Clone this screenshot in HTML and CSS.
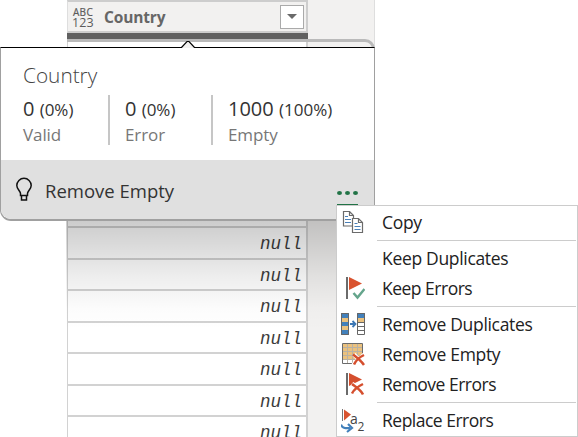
FILE: index.html
```html
<!DOCTYPE html>
<html lang="en">
<head>
<meta charset="utf-8">
<title>Country</title>
<link rel="stylesheet" href="styles.css">
</head>
<body>
<main class="workspace">
  <section class="column">
    <header class="column-header">
      <span class="type-icon"><span class="abc">ABC</span><span class="num">123</span></span>
      <span class="column-name">Country</span>
      <span class="filter"><svg width="10" height="5" viewBox="0 0 10 5"><path d="M0 0h10L5 5z" fill="#6a6a6a"/></svg></span>
    </header>
    <div class="quality-bar"></div>
    <div class="rows">
      <div class="row first"></div>
      <div class="row">null</div>
      <div class="row">null</div>
      <div class="row">null</div>
      <div class="row">null</div>
      <div class="row">null</div>
      <div class="row">null</div>
      <div class="row">null</div>
    </div>
  </section>
  <div class="gutter"></div>
</main>

<div class="shadow"></div>
<div class="frame"></div>
<aside class="card">
  <svg class="pointer" width="16" height="8" viewBox="0 0 16 8"><path d="M1 7.5L7 1.5h2L15 7.5V8H1z" fill="#f2f1f0"/><path d="M0 7.500h1.500L7 1.500h2l5.500 6H16" fill="none" stroke="#000" stroke-width="1.200"/></svg>
  <div class="summary">
    <h1 class="title">Country</h1>
    <div class="stats">
      <div class="stat valid"><div class="value"><span>0</span> <small>(0%)</small></div><div class="label">Valid</div></div>
      <div class="stat error"><div class="value"><span>0</span> <small>(0%)</small></div><div class="label">Error</div></div>
      <div class="stat empty"><div class="value"><span>1000</span> <small>(100%)</small></div><div class="label">Empty</div></div>
    </div>
  </div>
  <div class="suggestion">
    <svg class="bulb" width="18" height="25" viewBox="0 0 18 25"><path d="M5.500 18.500V16.500C5.500 14 1.800 12 1.800 8.500a7.200 7.200 0 0 1 14.400 0C16.200 12 12.500 14 12.500 16.500v2zM6.500 18.500v4.500h5v-4.500" fill="none" stroke="#111" stroke-width="1.500"/></svg>
    <span class="suggestion-text">Remove Empty</span>
    <span class="more"><i></i><i></i><i></i></span>
  </div>
</aside>

<nav class="menu">
  <div class="item"><svg width="24" height="24" viewBox="0 0 24 24"><g fill="#fff" stroke="#6b6b6b" stroke-width="1.200"><path d="M2.500 .500h6l4 4V15h-10zM8.500 .500v4h4"/><path d="M11.500 7.500h6l4 4v10h-10zM17.500 7.500v4h4"/></g><path d="M4 5.500h3M4 8.500h6M4 11.500h6M13.500 12.500h3M13.500 15.500h6M13.500 18.500h6" stroke="#4a80b8"/></svg><span>Copy</span></div>
  <hr>
  <div class="item"><svg width="24" height="24"></svg><span>Keep Duplicates</span></div>
  <div class="item tight"><svg width="24" height="24" viewBox="0 0 24 24"><path d="M5 0h2v22H5z" fill="#6b6b6b"/><path d="M8 0l13 6.500L8 13z" fill="#d9532f"/><path d="M12.500 16.500l4 4L24 12" fill="none" stroke="#fff" stroke-width="5"/><path d="M12.500 16l4 4.500L23.500 12" fill="none" stroke="#65a58c" stroke-width="2.500"/></svg><span>Keep Errors</span></div>
  <hr>
  <div class="item"><svg width="24" height="24" viewBox="0 0 24 24"><path d="M0 0h8v22H0z" fill="#4280bb"/><path d="M1 5h6v4H1zM1 13h6v4H1z" fill="#ebc17d"/><path d="M.5 .500h7v21h-7z" fill="none" stroke="#666"/><path d="M16 0h8v22h-8z" fill="#fff"/><path d="M16 0h8v5h-8z" fill="#4280bb"/><path d="M16 5h8v4h-8z" fill="#ebc17d"/><path d="M16.500 .500h7v21h-7zM16.500 9.500h7M16.500 13.500h7M16.500 17.500h7" fill="none" stroke="#666"/><path d="M9 11h5M11.500 8l3 3-3 3" fill="none" stroke="#3d78b5" stroke-width="1.800"/></svg><span>Remove Duplicates</span></div>
  <div class="item"><svg width="24" height="24" viewBox="0 0 24 24"><path d="M1.500 .500h20v20h-20z" fill="#fff"/><path d="M2 1h19v15H2z" fill="#ebc17d"/><path d="M6.500 1v19M11.500 1v19M16.500 1v19M2 4.500h19M2 8.500h19M2 12.500h19M2 16.500h19" stroke="#b9b2a5"/><path d="M21.500 13V.500h-20v20H14" fill="none" stroke="#6b6b6b"/><path d="M13 11.500l10 10.500M23 11.500L12 22" stroke="#fff" stroke-width="4"/><path d="M12 11.500c4 3 8 6 11 10.500M23 12c-4 2-8 5-10 9.500" stroke="#d54f2e" stroke-width="2.500" fill="none"/></svg><span>Remove Empty</span></div>
  <div class="item tight"><svg width="24" height="24" viewBox="0 0 24 24"><path d="M5 0h2v22H5z" fill="#6b6b6b"/><path d="M8 0l13 6.500L8 13z" fill="#d54f2e"/><path d="M11 10.500c4 3 9 6 11 10.500M22 10.500c-4 2-9 5-11 9.500" stroke="#fff" stroke-width="4" fill="none"/><path d="M11 11c4 3 9 6 11 10.500M22 11c-4 2-9 5-11 9.500" stroke="#d54f2e" stroke-width="2.500" fill="none"/></svg><span>Remove Errors</span></div>
  <hr>
  <div class="item tight"><svg width="24" height="24" viewBox="0 0 24 24"><path d="M1.500 0v12" stroke="#777"/><path d="M3 0.500l7 5-7 6z" fill="#d9532f"/><path d="M0 15.500c1 4 5 4 9 3.500M7 15l4 4-5 4" fill="none" stroke="#4280bb" stroke-width="2.200"/><text x="9" y="15" class="glyph" font-size="14">a</text><text x="16.500" y="22" class="glyph" font-size="12">2</text></svg><span>Replace Errors</span></div>
</nav>
</body>
</html>
```
FILE: styles.css
```css
* { box-sizing: border-box; }
body {
  margin: 0;
  width: 578px;
  height: 437px;
  overflow: hidden;
  position: relative;
  background: #fff;
  font-family: "Open Sans", "Noto Sans", sans-serif;
  color: #333;
}
.workspace { display: flex; height: 437px; padding-left: 67px; overflow: hidden; }
.column { width: 241px; }
.column-header {
  height: 33px;
  display: flex;
  align-items: center;
  border: 2px solid #cdcdcd;
  border-left: 1px solid #dedede;
  background: #f2f1f0;
  padding: 0 2px 0 4px;
}
.type-icon { width: 32px; display: flex; flex-direction: column; color: #5b5b5b; padding-top: 1px; }
.abc { font-size: 10px; line-height: 10px; letter-spacing: .3px; -webkit-text-stroke: .2px #5b5b5b; padding-left: 1px; }
.num { font-size: 12.500px; line-height: 11px; letter-spacing: .1px; }
.column-name { flex: 1; font-size: 15.500px; font-weight: 700; color: #666; letter-spacing: -.15px; padding-top: 1px; }
.filter {
  width: 24px;
  height: 24px;
  display: flex;
  align-items: center;
  justify-content: center;
  border: 1px solid #aaa;
  background: #fff;
}
.quality-bar { height: 6px; background: #606060; }
.rows { border: solid #d2d2d2; border-width: 0 2px 0 1px; height: 400px; }
.row {
  height: 31.500px;
  border-bottom: 2px solid #d2d2d2;
  padding-right: 4px;
  text-align: right;
  font: italic 17.500px/32px "Liberation Mono", monospace;
  color: #3c3c3c;
}
.row.first { height: 189px; }
.gutter { width: 67px; background: #f2f1f0; border-right: 1px solid #dedede; }
.shadow {
  position: absolute;
  left: 66px;
  top: 221px;
  width: 308px;
  height: 110px;
  background: linear-gradient(#0003, #00000026 20%, #00000012 50%, #00000003 80%, transparent);
}
.frame {
  position: absolute;
  left: 67px;
  top: 39px;
  width: 308px;
  height: 20px;
  border-top: 3px solid #bababa;
  border-right: 3px solid #bababa;
  border-top-right-radius: 10px;
}
.card {
  position: absolute;
  left: 0;
  top: 47px;
  width: 375px;
  height: 174px;
  background: #fff;
  border: solid #a0a0a0;
  border-width: 1px 1px 2px;
  border-top-color: #000;
  border-radius: 0 0 0 11px;
}
.pointer { position: absolute; left: 179px; top: -8px; }
.summary { height: 112px; padding: 12px 0 0 22px; }
.title { margin: 0; font-size: 20.800px; line-height: 31px; font-weight: 300; color: #444; }
.stats { display: flex; margin-top: 4px; height: 50px; }
.stat { height: 50px; white-space: nowrap; }
.stat + .stat { border-left: 2px solid #c6c6c6; padding-left: 15px; }
.valid { width: 85px; }
.error { width: 103px; }
.value { font-size: 20px; line-height: 28px; }
.value small { font-size: 17px; letter-spacing: 0; }
.label { font-size: 17px; line-height: 22px; color: #777; letter-spacing: -.1px; }
.suggestion {
  height: 59px;
  display: flex;
  align-items: center;
  padding-left: 14px;
  background: #e0e0e0;
  border-radius: 0 0 0 10px;
}
.suggestion-text { margin-left: 12px; font-size: 18.500px; flex: 1; padding-top: 2px; }
.more {
  align-self: flex-start;
  width: 21px;
  height: 45px;
  margin-right: 16px;
  padding-top: 31px;
  display: flex;
  justify-content: space-between;
  border-bottom: 1px solid #217346;
}
.more i { width: 5px; height: 4px; border-radius: 50%; background: #217346; }
.menu {
  position: absolute;
  left: 336px;
  top: 205px;
  width: 242px;
  height: 232px;
  padding: 2px 1px 0 4px;
  background: #fff;
  border: 1px solid #ccc;
}
.item { height: 30px; display: flex; align-items: center; gap: 17px; font-size: 17.500px; letter-spacing: -.32px; white-space: nowrap; color: #222; }
.item.tight { letter-spacing: -.5px; }
.item svg { flex: none; }
.item span { margin-top: -2px; }
.menu hr { height: 6px; margin: 0 0 0 36px; border: solid transparent; border-width: 2px 0 3px; background: #ccc; background-clip: padding-box; }
.glyph { font-family: "Open Sans", sans-serif; fill: #444; letter-spacing: 0; }
```
